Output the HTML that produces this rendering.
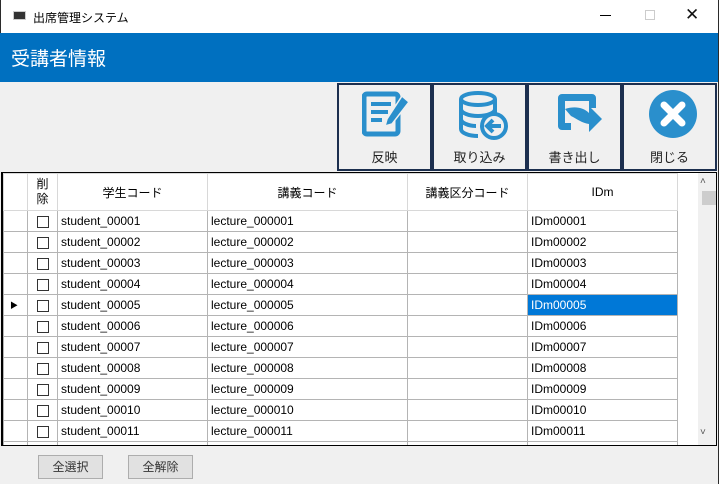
<!DOCTYPE html><html><head><meta charset="utf-8"><style>
*{margin:0;padding:0;box-sizing:border-box}
body{width:719px;height:484px;overflow:hidden;background:#f0f0f0;font-family:"Liberation Sans","Noto Sans CJK JP",sans-serif;position:relative}
.abs{position:absolute}
#tb{left:0;top:0;width:718px;height:33px;background:#fff;border-left:1px solid #2b2b2b}
#hd{left:0;top:33px;width:718px;height:49px;background:#0070c0;color:#fff;font-size:19px;padding:11px 0 0 11px}
.btn{top:83px;width:95px;height:88px;border:2px solid #1c2f4f;background:#f0f0f0;text-align:center;font-size:13px;color:#222}
.btn span{position:absolute;left:0;right:0;bottom:3px}
.btn svg{position:absolute;left:23px;top:5px}
#grid{left:1px;top:172px;width:716px;height:274px;border:1px solid #000;border-left:2px solid #000;background:#fff;overflow:hidden;font-size:12px}
table{border-collapse:collapse;position:absolute;left:0;top:0}
td{border:1px solid #b4b4b4;height:21px;padding:0 3px;white-space:nowrap;color:#000}
th{font-weight:normal;font-size:12px;border:1px solid #d8d8d8;height:37px}
.cb{display:inline-block;width:12px;height:12px;border:1px solid #333;vertical-align:middle}
.sel{background:#0078d7;color:#fff}
#sb{left:695px;top:0;width:19px;height:272px;background:#f0f0f0}
.fb{top:455px;width:65px;height:24px;border:1px solid #adadad;background:#e1e1e1;font-size:12px;text-align:center;line-height:22px;color:#333}
#rb{left:718px;top:0;width:1px;height:484px;background:#2b2b2b}
</style></head><body>
<div id="tb" class="abs">
<div class="abs" style="left:12px;top:11px;width:13px;height:9px;background:#333;border:1px solid #ccc"></div>
<div class="abs" style="left:32px;top:9px;font-size:12px;color:#000">出席管理システム</div>
<div class="abs" style="left:599px;top:15px;width:11px;height:1px;background:#000"></div>
<div class="abs" style="left:644px;top:10px;width:10px;height:10px;border:1px solid #ccc"></div>
<div class="abs" style="left:684px;top:5px;font-size:17px;color:#111">✕</div>
</div>
<div id="hd" class="abs">受講者情報</div>
<div class="btn abs" style="left:337px"><svg width="50" height="50" viewBox="0 0 50 50"><rect x="2" y="4" width="34" height="40" rx="3" fill="none" stroke="#2a8fcc" stroke-width="5"/><g stroke="#2a8fcc" stroke-width="4"><line x1="9" y1="14" x2="29" y2="14"/><line x1="9" y1="22" x2="26" y2="22"/><line x1="9" y1="30" x2="20" y2="30"/></g><path d="M40 6 L47 12 L30 34 L23 36 L25 29 Z" fill="#2a8fcc" stroke="#f0f0f0" stroke-width="1.5"/></svg><span>反映</span></div>
<div class="btn abs" style="left:432px"><svg width="52" height="52" viewBox="0 0 52 52"><g fill="none" stroke="#2a8fcc" stroke-width="4"><ellipse cx="21" cy="9" rx="17" ry="6"/><path d="M4 9v30c0 4 8 7 17 7M4 19c0 4 8 7 17 7s17-3 17-7M4 29c0 4 8 7 15 7M38 9v14"/><circle cx="37" cy="36" r="12"/><path d="M44 36H31M36 30l-6 6 6 6"/></g></svg><span>取り込み</span></div>
<div class="btn abs" style="left:527px"><svg width="52" height="50" viewBox="0 0 52 50"><path d="M10 4h30a4 4 0 0 1 4 4v10h-7V11H13v22h6v7h-9a4 4 0 0 1-4-4V8a4 4 0 0 1 4-4z" fill="#2a8fcc"/><path d="M13 19c9-3 18-2 24 4v-7l13 13-13 13v-8c-7-1-12-5-18-8z" fill="#2a8fcc"/></svg><span>書き出し</span></div>
<div class="btn abs" style="left:622px"><svg width="52" height="50" viewBox="0 0 52 50"><circle cx="26" cy="24" r="24" fill="#2a8fcc"/><g stroke="#fff" stroke-width="7" stroke-linecap="round"><line x1="17" y1="15" x2="35" y2="33"/><line x1="35" y1="15" x2="17" y2="33"/></g></svg><span>閉じる</span></div>
<div id="grid" class="abs">
<table>
<tr><th style="width:24px"></th><th style="width:30px;line-height:15px">削<br>除</th><th style="width:150px">学生コード</th><th style="width:200px">講義コード</th><th style="width:120px">講義区分コード</th><th style="width:150px">IDm</th></tr>
<tr><td></td><td style="text-align:center"><span class="cb"></span></td><td>student_00001</td><td>lecture_000001</td><td></td><td>IDm00001</td></tr>
<tr><td></td><td style="text-align:center"><span class="cb"></span></td><td>student_00002</td><td>lecture_000002</td><td></td><td>IDm00002</td></tr>
<tr><td></td><td style="text-align:center"><span class="cb"></span></td><td>student_00003</td><td>lecture_000003</td><td></td><td>IDm00003</td></tr>
<tr><td></td><td style="text-align:center"><span class="cb"></span></td><td>student_00004</td><td>lecture_000004</td><td></td><td>IDm00004</td></tr>
<tr><td style="font-size:8px;padding-left:6px">▶</td><td style="text-align:center"><span class="cb"></span></td><td>student_00005</td><td>lecture_000005</td><td></td><td class="sel">IDm00005</td></tr>
<tr><td></td><td style="text-align:center"><span class="cb"></span></td><td>student_00006</td><td>lecture_000006</td><td></td><td>IDm00006</td></tr>
<tr><td></td><td style="text-align:center"><span class="cb"></span></td><td>student_00007</td><td>lecture_000007</td><td></td><td>IDm00007</td></tr>
<tr><td></td><td style="text-align:center"><span class="cb"></span></td><td>student_00008</td><td>lecture_000008</td><td></td><td>IDm00008</td></tr>
<tr><td></td><td style="text-align:center"><span class="cb"></span></td><td>student_00009</td><td>lecture_000009</td><td></td><td>IDm00009</td></tr>
<tr><td></td><td style="text-align:center"><span class="cb"></span></td><td>student_00010</td><td>lecture_000010</td><td></td><td>IDm00010</td></tr>
<tr><td></td><td style="text-align:center"><span class="cb"></span></td><td>student_00011</td><td>lecture_000011</td><td></td><td>IDm00011</td></tr>
<tr><td></td><td style="text-align:center"><span class="cb"></span></td><td>student_00012</td><td>lecture_000012</td><td></td><td>IDm00012</td></tr>
</table>
<div id="sb" class="abs"><div class="abs" style="left:2px;top:3px;font-size:10px;color:#555">˄</div><div class="abs" style="left:4px;top:18px;width:14px;height:14px;background:#cdcdcd"></div><div class="abs" style="left:2px;top:254px;font-size:10px;color:#555">˅</div></div>
</div>
<div class="fb abs" style="left:38px">全選択</div>
<div class="fb abs" style="left:128px">全解除</div>
<div id="rb" class="abs"></div>
</body></html>
